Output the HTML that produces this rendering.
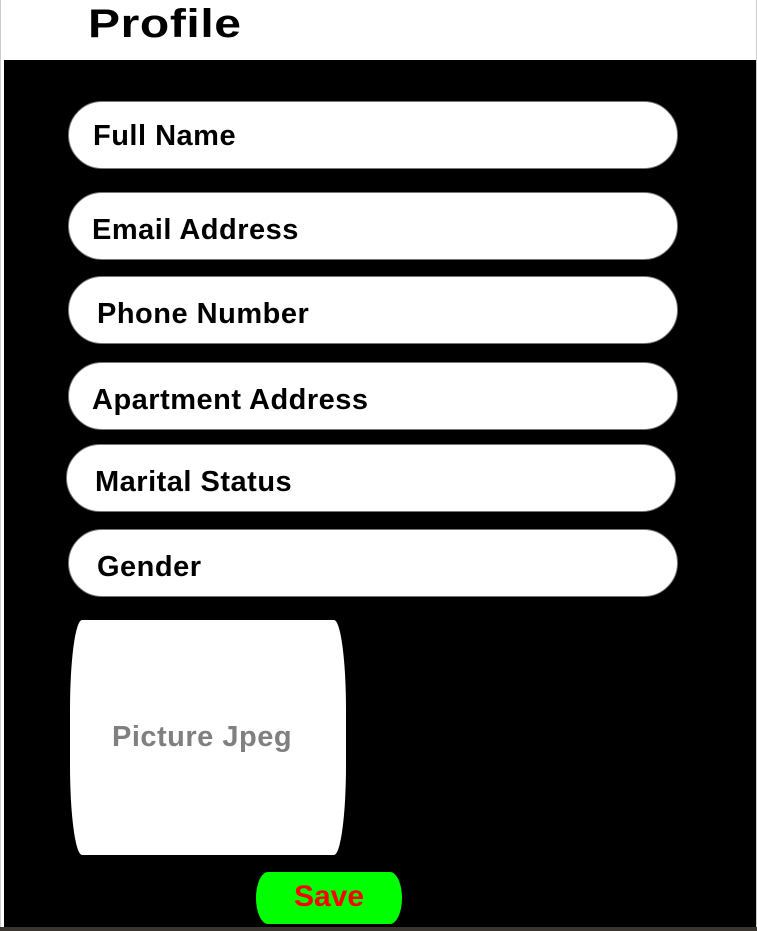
<!DOCTYPE html>
<html><head><style>
html,body{margin:0;padding:0;width:757px;height:931px;overflow:hidden;background:#fff;font-family:"Liberation Sans",Arial,sans-serif;}
.edge{position:absolute;left:0;top:0;width:1px;height:931px;background:#ccc}
.edger{position:absolute;left:756px;top:0;width:1px;height:931px;background:#ccc}
h1{position:absolute;left:88px;top:2px;margin:0;font-size:40px;font-weight:bold;color:#000;line-height:44px;letter-spacing:0.5px;transform:scaleX(1.2);transform-origin:left}
.bk{position:absolute;left:4px;top:60px;width:752px;height:867px;background:#000}
.bot{position:absolute;left:0;top:927px;width:757px;height:4px;background:#3a352e}
.f{position:absolute;background:#fff;border:1px solid #777;border-radius:34px;box-sizing:border-box;height:68px;font-weight:bold;font-size:29px;line-height:68px;color:#000;letter-spacing:0.5px}
.pic{position:absolute;left:70px;top:620px;width:276px;height:235px;background:#fff;border-radius:12px/90px;font-weight:bold;font-size:29px;color:#808080;line-height:235px;padding-left:42px;box-sizing:border-box;letter-spacing:0.5px}
.save{position:absolute;left:256px;top:872px;width:146px;height:52px;background:#00ff00;border-radius:12px/26px;color:#ff0000;font-weight:bold;font-size:30px;text-align:center;line-height:50px}
</style></head><body>
<div class="edge"></div><div class="edger"></div>
<h1>Profile</h1>
<div class="bk"></div>
<div class="f" style="left:68px;top:101px;width:610px;padding-left:24px">Full Name</div>
<div class="f" style="left:68px;top:192px;width:610px;padding-left:23px;line-height:74px">Email Address</div>
<div class="f" style="left:68px;top:276px;width:610px;padding-left:28px;line-height:74px">Phone Number</div>
<div class="f" style="left:68px;top:362px;width:610px;padding-left:23px;line-height:74px">Apartment Address</div>
<div class="f" style="left:66px;top:444px;width:610px;padding-left:28px;line-height:74px">Marital Status</div>
<div class="f" style="left:68px;top:529px;width:610px;padding-left:28px;line-height:74px">Gender</div>
<div class="pic">Picture Jpeg</div>
<div class="save">Save</div>
<div class="bot"></div>
</body></html>
